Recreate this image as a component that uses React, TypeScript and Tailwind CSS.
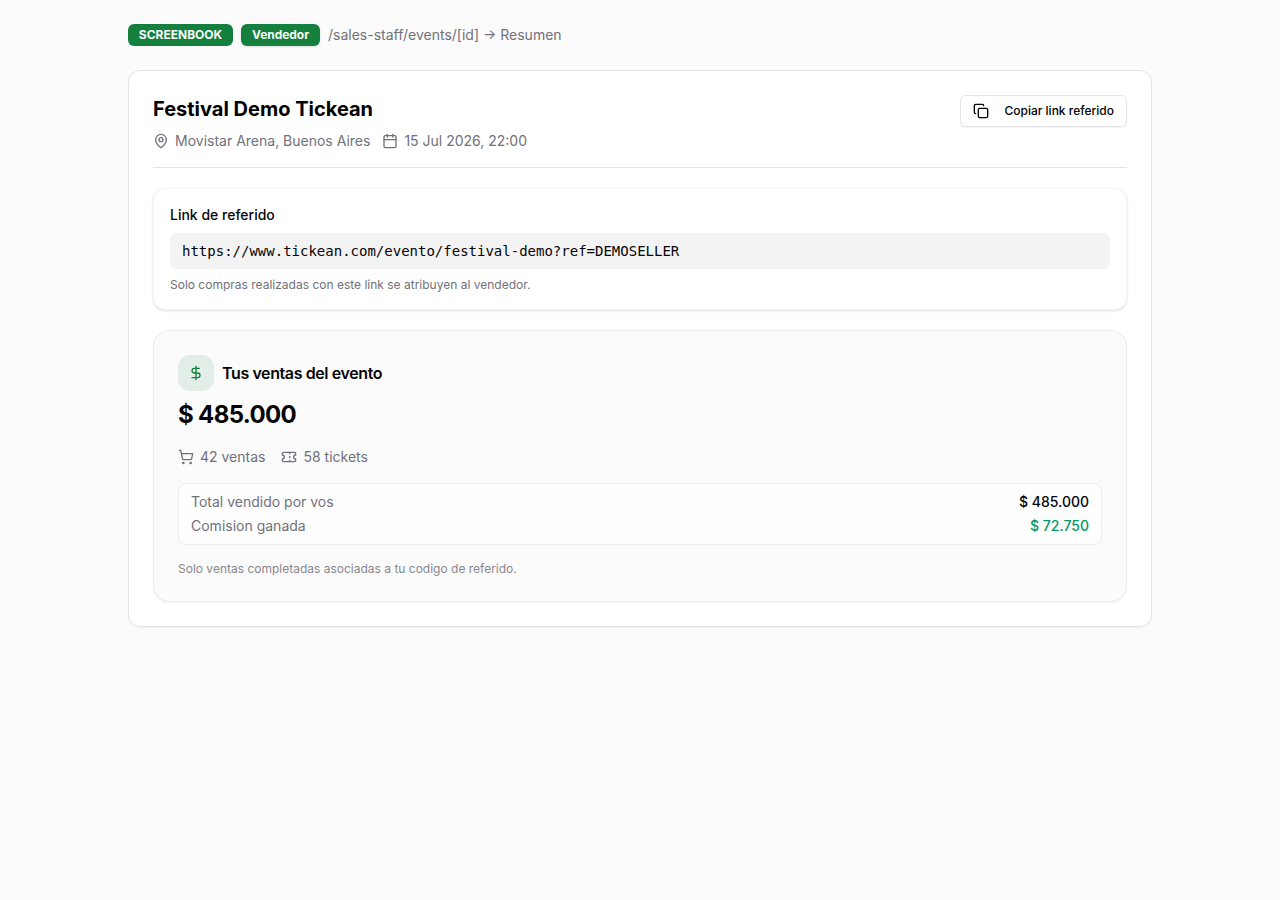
import { Calendar, Copy, DollarSign, MapPin, ShoppingCart, Ticket } from "lucide-react";

function Badge({ children, extra = "" }: { children: string; extra?: string }) {
  return (
    <span className={`inline-flex h-[22px] items-center justify-center rounded-md bg-[#15803d] text-xs font-bold whitespace-nowrap text-[#fafafa] ${extra}`}>
      {children}
    </span>
  );
}

export default function App() {
  return (
    <div className="min-h-screen bg-[#fbfbfb] pt-6 font-['Inter',sans-serif] text-[#050506]">
      <div className="mx-auto w-[1024px]">
        <div className="flex h-[22px] items-center gap-2">
          <Badge extra="w-[105px]">SCREENBOOK</Badge>
          <Badge extra="w-[79px] tracking-[-0.04px] shadow-sm">Vendedor</Badge>
          <span className="text-sm text-[#71717a]">/sales-staff/events/[id] → Resumen</span>
        </div>

        <main className="mt-6 rounded-xl border border-[#e4e4e7] bg-white px-6 pt-6 pb-6 shadow-xs">
          <header className="flex h-[73px] items-start justify-between border-b border-[#e4e4e7]">
            <div>
              <h1 className="text-xl leading-7 font-bold text-black">Festival Demo Tickean</h1>
              <div className="mt-2 flex items-center gap-3 text-sm text-[#71717a]">
                <span className="flex items-center gap-1.5"><MapPin size={16} />Movistar Arena, Buenos Aires</span>
                <span className="flex items-center gap-1.5"><Calendar size={16} />15 Jul 2026, 22:00</span>
              </div>
            </div>
            <button className="flex h-8 w-[167px] items-center justify-between rounded-md border border-[#e4e4e7] bg-white px-3 text-xs font-medium whitespace-nowrap text-black shadow-xs">
              <Copy size={16} />Copiar link referido
            </button>
          </header>

          <section className="mt-5 h-[122px] rounded-xl border border-[#f4f4f5] bg-white p-4 shadow-sm">
            <h2 className="text-sm font-medium">Link de referido</h2>
            <div className="mt-2 h-9 rounded-md bg-[#f3f3f3] px-3 py-2 font-['DejaVu_Sans_Mono',monospace] text-sm">
              https://www.tickean.com/evento/festival-demo?ref=DEMOSELLER
            </div>
            <p className="mt-2 text-xs text-[#71717a]">Solo compras realizadas con este link se atribuyen al vendedor.</p>
          </section>

          <section className="mt-5 h-[272px] rounded-2xl border border-[#ececee] bg-[#fbfbfb] p-6 shadow-xs">
            <div className="flex items-center gap-2">
              <div className="flex size-9 items-center justify-center rounded-xl bg-[#e3eee8] text-[#15803d]"><DollarSign size={16} /></div>
              <h2 className="text-base font-semibold tracking-tight">Tus ventas del evento</h2>
            </div>
            <div className="mt-2 text-2xl leading-8 font-bold tracking-[-0.65px]">$ 485.000</div>
            <div className="mt-4 flex items-center gap-4 text-sm text-[#71717a]">
              <span className="flex items-center gap-1.5"><ShoppingCart size={16} />42 ventas</span>
              <span className="flex items-center gap-1.5"><Ticket size={16} />58 tickets</span>
            </div>
            <div className="mt-4 flex h-[62px] flex-col gap-1 rounded-lg border border-[#ececee] bg-[#fefefe] px-3 py-2 text-sm">
              <div className="flex justify-between"><span className="text-[#71717a]">Total vendido por vos</span><span className="font-medium">$ 485.000</span></div>
              <div className="flex justify-between"><span className="text-[#71717a]">Comision ganada</span><span className="font-medium text-[#059669]">$ 72.750</span></div>
            </div>
            <p className="mt-4 text-xs text-[#88888f]">Solo ventas completadas asociadas a tu codigo de referido.</p>
          </section>
        </main>
      </div>
    </div>
  );
}
